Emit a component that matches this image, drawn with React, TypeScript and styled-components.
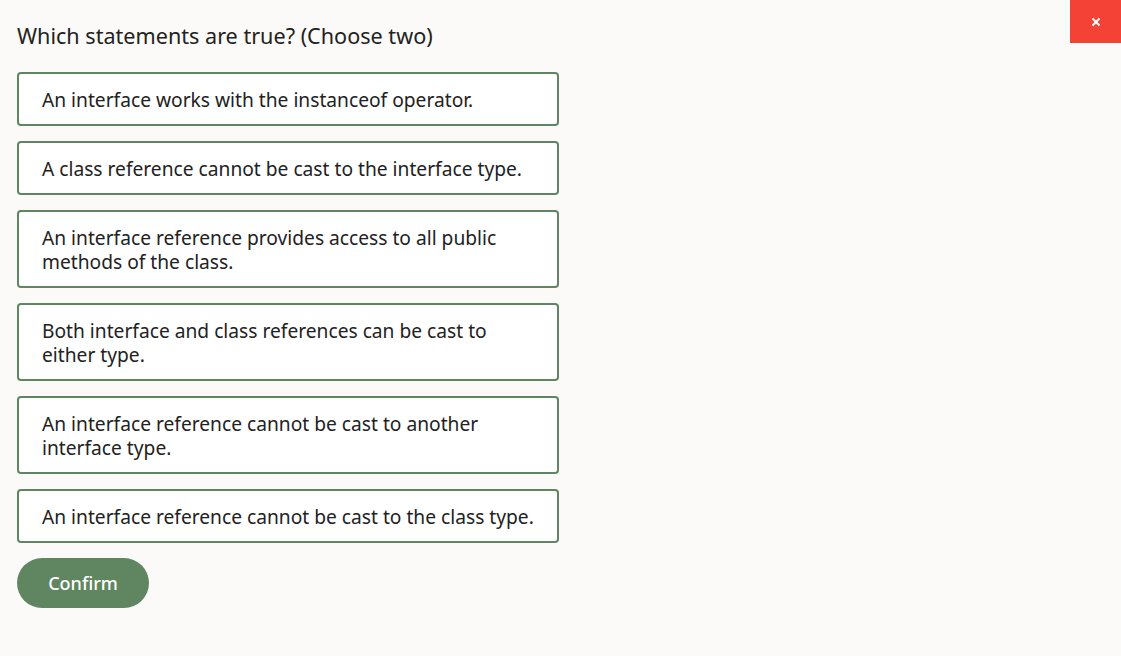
import React from "react";
import styled, { createGlobalStyle } from "styled-components";

const Global = createGlobalStyle`
  html, body { margin: 0; padding: 0; background: #fbfaf8; }
  body { font-family: "Noto Sans", "Open Sans", sans-serif; color: #1f1f1f; }
`;

const Page = styled.div`
  position: relative;
  min-height: 656px;
  padding: 20px 17px 0;
  box-sizing: border-box;
`;

const Heading = styled.h1`
  margin: 0 0 20px;
  font-size: 21.6px;
  font-weight: 400;
  line-height: 32px;
  color: #222;
`;

const List = styled.div`
  display: flex;
  flex-direction: column;
  gap: 15px;
  width: 542px;
`;

const Option = styled.button`
  display: block;
  text-align: left;
  background: #fff;
  border: 2px solid #5f8660;
  border-radius: 4px;
  padding: 14px 23px 12px;
  font-family: inherit;
  font-size: 19.2px;
  line-height: 24px;
  color: #222;
  cursor: pointer;
`;

const Confirm = styled.button`
  margin-top: 15px;
  width: 132px;
  height: 50px;
  border: none;
  border-radius: 25px;
  background: #5f8660;
  color: #fff;
  font-family: inherit;
  font-size: 18px;
  font-weight: 500;
  cursor: pointer;
`;

const Close = styled.button`
  position: absolute;
  top: 0;
  right: 0;
  width: 51px;
  height: 43px;
  border: none;
  background: #f44336;
  color: #fff;
  display: flex;
  align-items: center;
  justify-content: center;
  cursor: pointer;
  padding: 0;
`;

const options = [
  "An interface works with the instanceof operator.",
  "A class reference cannot be cast to the interface type.",
  "An interface reference provides access to all public methods of the class.",
  "Both interface and class references can be cast to either type.",
  "An interface reference cannot be cast to another interface type.",
  "An interface reference cannot be cast to the class type.",
];

export default function App() {
  return (
    <>
      <Global />
      <Page>
        <Close aria-label="Close">
          <svg width="10" height="10" viewBox="0 0 10 10">
            <path d="M1.5 1.5 L8.5 8.5 M8.5 1.5 L1.5 8.5" stroke="#fff" strokeWidth="2" />
          </svg>
        </Close>
        <Heading>Which statements are true? (Choose two)</Heading>
        <List>
          {options.map((o) => (
            <Option key={o}>{o}</Option>
          ))}
        </List>
        <Confirm>Confirm</Confirm>
      </Page>
    </>
  );
}
